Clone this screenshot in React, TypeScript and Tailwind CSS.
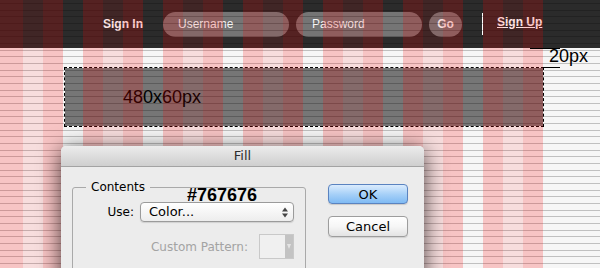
export default function App() {
  const groups = [0, 1, 2, 3, 4, 5];

  return (
    <div className="relative h-[268px] w-[600px] overflow-hidden bg-[#f6f6f6] font-['Liberation_Sans',Arial,sans-serif]">
      {/* top nav bar */}
      <header className="flex h-[48px] items-center bg-[#2b2b2b] pl-[103px] text-[12px] text-white">
        <span className="font-bold">Sign In</span>
        <input
          className="ml-[20px] h-[25px] w-[126px] rounded-full bg-white/35 pl-[15px] text-[12px] outline-none placeholder:text-white/95"
          placeholder="Username"
        />
        <input
          type="password"
          className="ml-[7px] h-[25px] w-[126px] rounded-full bg-white/35 pl-[16px] text-[12px] outline-none placeholder:text-white/95"
          placeholder="Password"
        />
        <button className="ml-[7px] h-[25px] w-[33px] rounded-full bg-white/35 font-bold text-white/95">Go</button>
        <span className="ml-[20px] h-[22px] w-px bg-white" />
        <a href="#" className="mb-[4px] ml-[14px] font-bold underline">
          Sign Up
        </a>
      </header>

      {/* selected 480x60 area */}
      <div className="ml-[64px] mt-[19px] h-[60px] w-[480px] border border-dashed border-black bg-white">
        <div className="flex h-full items-center bg-[#767676] pl-[58px] text-[18px] text-black">480x60px</div>
      </div>

      {/* baseline lines */}
      <div className="pointer-events-none absolute inset-0 z-10 bg-[linear-gradient(to_bottom,rgba(0,0,0,0.22)_0px,rgba(0,0,0,0.22)_1px,transparent_1px,transparent_7px,rgba(0,0,0,0.22)_7px,rgba(0,0,0,0.22)_8px,transparent_8px,transparent_13px,rgba(0,0,0,0.22)_13px,rgba(0,0,0,0.22)_14px,transparent_14px)] bg-[length:100%_20px] bg-[position:0_3px]" />

      {/* column grid */}
      <div className="pointer-events-none absolute inset-0 z-10 flex">
        <div className="w-[23px] bg-[rgba(255,0,0,0.2)]" />
        <div className="w-[20px] bg-[rgba(255,0,0,0.1)]" />
        <div className="w-[20px] bg-[rgba(255,0,0,0.2)]" />
        <div className="w-[20px]" />
        {groups.map((g) => (
          <div key={g} className="flex">
            <div className="w-[20px] bg-[rgba(255,0,0,0.2)]" />
            <div className="w-[20px] bg-[rgba(255,0,0,0.1)]" />
            <div className="w-[20px] bg-[rgba(255,0,0,0.2)]" />
            <div className="w-[20px]" />
          </div>
        ))}
      </div>

      {/* Fill dialog */}
      <div className="relative z-20 ml-[61px] mt-[19px] h-[140px] w-[363px] rounded-t-[5px] bg-[#ececec] font-['DejaVu_Sans',sans-serif] shadow-[0_4px_22px_rgba(0,0,0,0.7)]">
        <div className="flex h-[21px] items-center justify-center rounded-t-[5px] border-b border-[#a3a3a3] bg-gradient-to-b from-[#ececec] to-[#cfcfcf] text-[13px] text-[#2e2e2e]">
          Fill
        </div>
        <div className="flex items-start">
          <fieldset className="ml-[11px] mt-[13px] h-[100px] w-[234px] rounded-[3px] border border-[#a9a9a9]">
            <legend className="ml-[13px] px-[5px] text-[12px] leading-[14px] text-black">Contents</legend>
            <div className="flex flex-col items-end pr-[11px]">
              <div className="mt-[8px] flex items-center gap-[6px]">
                <span className="text-[12px] text-black">Use:</span>
                <div className="flex h-[20px] w-[154px] items-center justify-between rounded-[4px] border border-[#9b9b9b] bg-gradient-to-b from-white to-[#ededed] pl-[8px] pr-[5px] text-[13px] text-black shadow-[0_1px_1px_rgba(0,0,0,0.12)]">
                  <span>Color...</span>
                  <svg width="6" height="11" viewBox="0 0 6 11">
                    <path d="M0 4.5 L3 0.5 L6 4.5 Z" fill="#444" />
                    <path d="M0 6.5 L3 10.5 L6 6.5 Z" fill="#444" />
                  </svg>
                </div>
              </div>
              <div className="mt-[12px] flex items-center gap-[11px]">
                <span className="text-[12px] text-[#a3a3a3]">Custom Pattern:</span>
                <div className="flex h-[25px] w-[35px] border border-[#c9c9c9] bg-[#f0f0f0]">
                  <div className="flex-1" />
                  <div className="flex w-[8px] items-center justify-center bg-[#c3c3c3]">
                    <svg width="4" height="5" viewBox="0 0 4 5">
                      <path d="M0 0 L4 0 L2 5 Z" fill="#e4e4e4" />
                    </svg>
                  </div>
                </div>
              </div>
            </div>
          </fieldset>
          <div className="ml-[22px] mt-[17px] flex flex-col gap-[12px]">
            <button className="h-[20px] w-[80px] rounded-[4px] border border-[#5a83c0] bg-gradient-to-b from-[#dbecfd] via-[#a8d1f8] to-[#7fbaf3] text-[13px] text-black shadow-[0_1px_1px_rgba(0,0,0,0.15)]">
              OK
            </button>
            <button className="h-[21px] w-[80px] rounded-[4px] border border-[#9d9d9d] bg-gradient-to-b from-white via-[#f6f6f6] to-[#e3e3e3] text-[13px] text-black shadow-[0_1px_1px_rgba(0,0,0,0.12)]">
              Cancel
            </button>
          </div>
        </div>
      </div>

      {/* annotations */}
      <div className="absolute left-[530px] top-[48px] z-30 h-px w-[30px] bg-black" />
      <div className="absolute left-[543px] top-[67px] z-30 h-px w-[17px] bg-black" />
      <span className="absolute left-[549px] top-[47px] z-30 text-[18px] leading-none text-black">20px</span>
      <span className="absolute left-[187px] top-[186px] z-30 text-[18px] font-bold leading-none text-black">#767676</span>
    </div>
  );
}
